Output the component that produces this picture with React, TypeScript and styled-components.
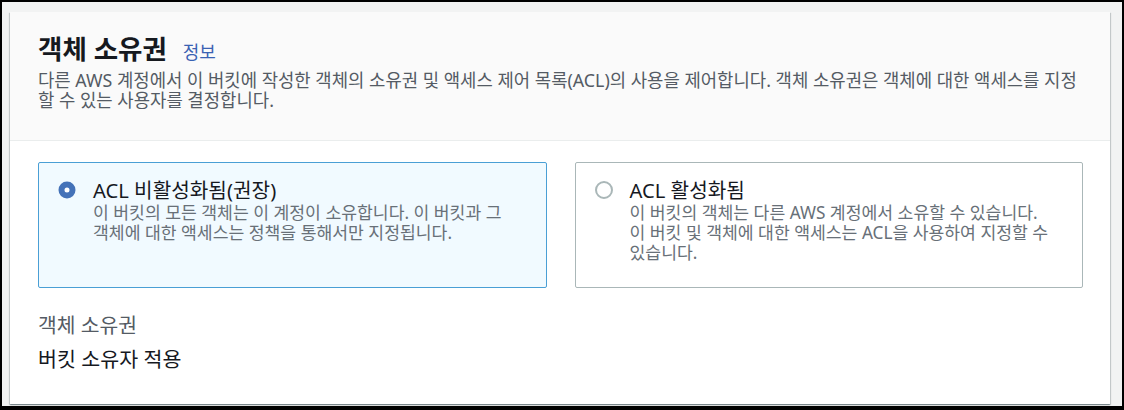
import React from 'react'
import styled, { createGlobalStyle } from 'styled-components'

const Colors = {
  Frame: '#000000',
  Page: '#f2f3f3',
  Card: '#ffffff',
  HeaderBG: '#fafafa',
  Divider: '#eaeded',
  TX1: '#16191f',
  TX2: '#545b64',
  TX3: '#687078',
  Link: '#3a62b3',
  Selected: '#4a9fd5',
  SelectedBG: '#f1faff',
  Radio: '#4472b8',
  Idle: '#aab7b8',
}

const GlobalStyle = createGlobalStyle`
  body {
    margin: 0;
    font-family: 'Noto Sans', 'Noto Sans CJK KR', sans-serif;
    color: ${Colors.TX1};
  }
`

const Frame = styled.div`
  width: 1124px;
  height: 410px;
  box-sizing: border-box;
  border: 2px solid ${Colors.Frame};
  border-bottom-width: 4px;
  background: ${Colors.Page};
  padding: 10px 12px 0 8px;
  overflow: hidden;
`

const Container = styled.section`
  background: ${Colors.Card};
  box-shadow: 0 1px 1px 0 rgba(0, 28, 36, 0.3),
    1px 1px 1px 0 rgba(0, 28, 36, 0.15), -1px 1px 1px 0 rgba(0, 28, 36, 0.15);
`

const Header = styled.header`
  background: ${Colors.HeaderBG};
  border-bottom: 1px solid ${Colors.Divider};
  padding: 20px 20px 30px 28px;
  .titleRow {
    display: flex;
    align-items: baseline;
    gap: 16px;
  }
  .title {
    margin: 0;
    font-size: 26.5px;
    line-height: 34px;
    font-weight: 700;
    color: ${Colors.TX1};
  }
  .info {
    font-size: 18px;
    color: ${Colors.Link};
    text-decoration: none;
  }
  .description {
    margin: 4px 0 0;
    font-size: 17.8px;
    line-height: 20px;
    color: ${Colors.TX2};
  }
`

const Line = styled.span`
  display: block;
  white-space: nowrap;
`

const Body = styled.div`
  padding: 21px 27px 33px 28px;
`

const Tiles = styled.div`
  display: grid;
  grid-template-columns: 1fr 1fr;
  gap: 28px;
`

const Tile = styled.label<{ $selected?: boolean }>`
  display: flex;
  align-items: flex-start;
  gap: 17px;
  padding: 15px 20px 24px 19px;
  border: 1px solid ${p => (p.$selected ? Colors.Selected : Colors.Idle)};
  border-radius: 2px;
  background: ${p => (p.$selected ? Colors.SelectedBG : Colors.Card)};
  cursor: pointer;
  .dot {
    flex: none;
    height: 24px;
    display: flex;
    align-items: center;
  }
  .label {
    display: block;
    font-size: 20.2px;
    line-height: 24px;
    color: ${Colors.TX1};
  }
  .hint {
    display: block;
    margin-top: 1px;
    font-size: 17.2px;
    line-height: 20px;
    color: ${Colors.TX3};
  }
`

const Field = styled.div`
  margin-top: 25px;
  .key {
    font-size: 20.4px;
    line-height: 24px;
    color: ${Colors.TX2};
  }
  .value {
    margin-top: 10px;
    font-size: 20.6px;
    line-height: 24px;
    color: ${Colors.TX1};
  }
`

const RadioDot: React.FC<{ checked?: boolean }> = ({ checked }) => (
  <svg width="18" height="18" viewBox="0 0 18 18">
    {checked ? (
      <circle cx="9" cy="9" r="5.5" fill="#fff" stroke={Colors.Radio} strokeWidth="6" />
    ) : (
      <circle cx="9" cy="9" r="8" fill="#fff" stroke={Colors.Idle} strokeWidth="2" />
    )}
  </svg>
)

const options = [
  {
    id: 'disabled',
    label: 'ACL 비활성화됨(권장)',
    hint: ['이 버킷의 모든 객체는 이 계정이 소유합니다. 이 버킷과 그', '객체에 대한 액세스는 정책을 통해서만 지정됩니다.'],
  },
  {
    id: 'enabled',
    label: 'ACL 활성화됨',
    hint: [
      '이 버킷의 객체는 다른 AWS 계정에서 소유할 수 있습니다.',
      '이 버킷 및 객체에 대한 액세스는 ACL을 사용하여 지정할 수',
      '있습니다.',
    ],
  },
]

const description = [
  '다른 AWS 계정에서 이 버킷에 작성한 객체의 소유권 및 액세스 제어 목록(ACL)의 사용을 제어합니다. 객체 소유권은 객체에 대한 액세스를 지정',
  '할 수 있는 사용자를 결정합니다.',
]

export default function App() {
  const [choice, setChoice] = React.useState('disabled')
  return (
    <>
      <GlobalStyle />
      <Frame>
        <Container>
          <Header>
            <div className="titleRow">
              <h2 className="title">객체 소유권</h2>
              <a className="info" href="#">정보</a>
            </div>
            <p className="description">
              {description.map(l => (
                <Line key={l}>{l}</Line>
              ))}
            </p>
          </Header>
          <Body>
            <Tiles>
              {options.map(o => (
                <Tile key={o.id} $selected={choice === o.id} onClick={() => setChoice(o.id)}>
                  <span className="dot">
                    <RadioDot checked={choice === o.id} />
                  </span>
                  <span>
                    <span className="label">{o.label}</span>
                    <span className="hint">
                      {o.hint.map(l => (
                        <Line key={l}>{l}</Line>
                      ))}
                    </span>
                  </span>
                </Tile>
              ))}
            </Tiles>
            <Field>
              <div className="key">객체 소유권</div>
              <div className="value">버킷 소유자 적용</div>
            </Field>
          </Body>
        </Container>
      </Frame>
    </>
  )
}
